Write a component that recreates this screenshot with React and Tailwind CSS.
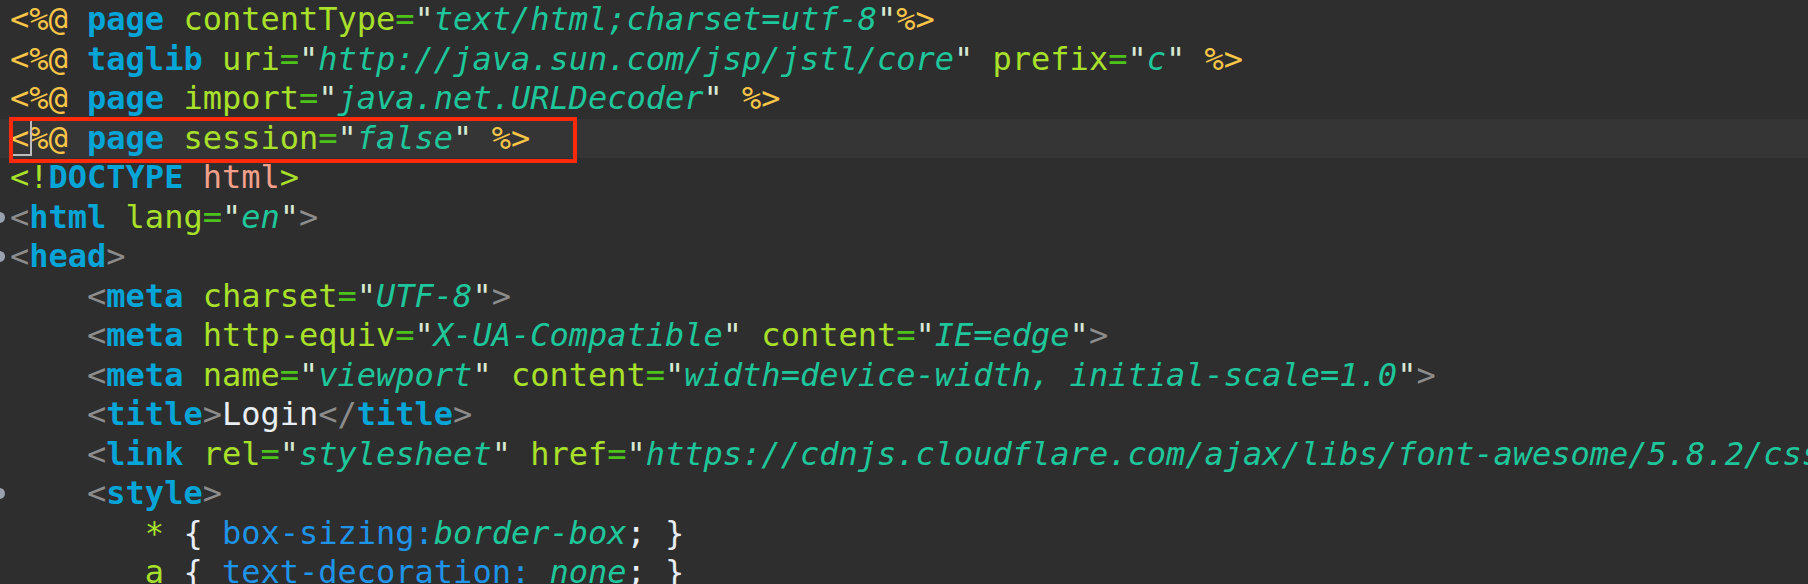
const T = {
  d: "text-[#f7c548]",
  k: "text-[#06a5d8] font-bold",
  a: "text-[#a9e02a]",
  e: "text-[#4cc21b]",
  q: "text-[#d6e8d2]",
  s: "text-[#1ec79b] italic",
  p: "text-[#8c8c8c]",
  h: "text-[#f3a08a]",
  w: "text-[#e8eef4]",
  b: "text-[#1e94e8]",
  n: "",
};

const q = (v) => [
  ["q", '"'],
  ["s", v],
  ["q", '"'],
];

const lines = [
  { t: [["d", "<%@ "], ["k", "page"], ["a", " contentType"], ["e", "="], ...q("text/html;charset=utf-8"), ["d", "%>"]] },
  { t: [["d", "<%@ "], ["k", "taglib"], ["a", " uri"], ["e", "="], ...q("http://java.sun.com/jsp/jstl/core"), ["a", " prefix"], ["e", "="], ...q("c"), ["d", " %>"]] },
  { t: [["d", "<%@ "], ["k", "page"], ["a", " import"], ["e", "="], ...q("java.net.URLDecoder"), ["d", " %>"]] },
  { t: [["d", "<%@ "], ["k", "page"], ["a", " session"], ["e", "="], ...q("false"), ["d", " %>"]], active: true },
  { t: [["a", "<!"], ["k", "DOCTYPE"], ["h", " html"], ["a", ">"]] },
  { t: [["p", "<"], ["k", "html"], ["a", " lang"], ["e", "="], ...q("en"), ["p", ">"]], fold: true },
  { t: [["p", "<"], ["k", "head"], ["p", ">"]], fold: true },
  { t: [["n", "    "], ["p", "<"], ["k", "meta"], ["a", " charset"], ["e", "="], ...q("UTF-8"), ["p", ">"]] },
  { t: [["n", "    "], ["p", "<"], ["k", "meta"], ["a", " http-equiv"], ["e", "="], ...q("X-UA-Compatible"), ["a", " content"], ["e", "="], ...q("IE=edge"), ["p", ">"]] },
  { t: [["n", "    "], ["p", "<"], ["k", "meta"], ["a", " name"], ["e", "="], ...q("viewport"), ["a", " content"], ["e", "="], ...q("width=device-width, initial-scale=1.0"), ["p", ">"]] },
  { t: [["n", "    "], ["p", "<"], ["k", "title"], ["p", ">"], ["w", "Login"], ["p", "</"], ["k", "title"], ["p", ">"]] },
  { t: [["n", "    "], ["p", "<"], ["k", "link"], ["a", " rel"], ["e", "="], ...q("stylesheet"), ["a", " href"], ["e", "="], ...q("https://cdnjs.cloudflare.com/ajax/libs/font-awesome/5.8.2/css/all.min.css"), ["p", ">"]] },
  { t: [["n", "    "], ["p", "<"], ["k", "style"], ["p", ">"]], fold: true },
  { t: [["n", "       "], ["a", "*"], ["w", " { "], ["b", "box-sizing:"], ["s", "border-box"], ["w", "; }"]] },
  { t: [["n", "       "], ["a", "a"], ["w", " { "], ["b", "text-decoration:"], ["s", " none"], ["w", "; }"]] },
];

export default function App() {
  return (
    <div className="relative w-[1808px] h-[584px] overflow-hidden bg-[#2e2e2e] font-['DejaVu_Sans_Mono',monospace] text-[32px] leading-[39.5px]">
      {lines.map((line, i) => (
        <div
          key={i}
          className={`relative h-[39.5px] pl-[10px] whitespace-pre ${line.active ? "bg-[#353535]" : ""}`}
        >
          {line.fold && (
            <span className="absolute left-[-6px] top-[14px] w-[11px] h-[11px] rounded-full bg-[#9aa1ae]" />
          )}
          {line.active && (
            <span className="absolute left-[10px] top-0 w-[22px] h-[37px] border-2 border-[#bdbdbd]" />
          )}
          {line.t.map(([c, v], j) => (
            <span key={j} className={T[c]}>
              {v}
            </span>
          ))}
        </div>
      ))}
      <div className="absolute left-[9px] top-[117px] w-[568px] h-[46px] border-4 border-[#ff2a0a]" />
    </div>
  );
}
